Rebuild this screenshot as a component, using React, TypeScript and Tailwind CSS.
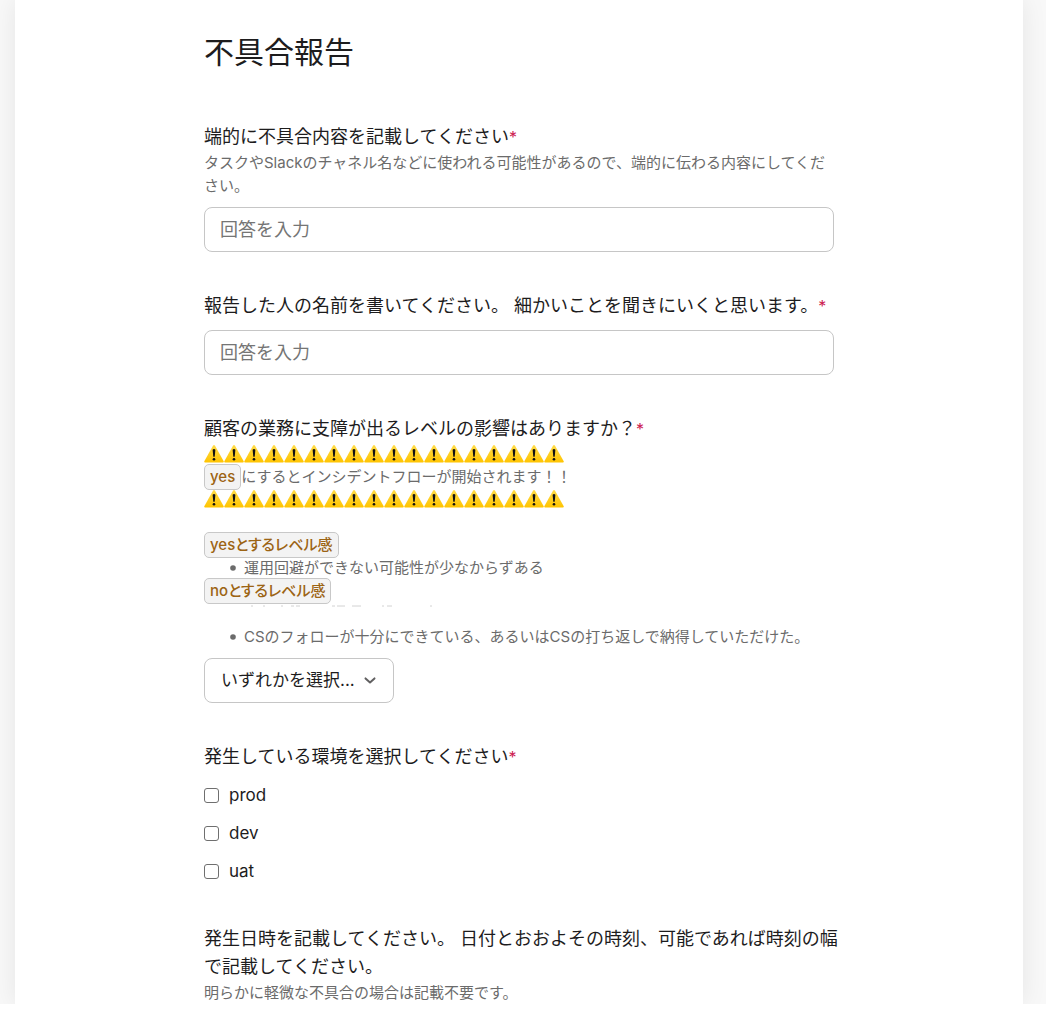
import { Fragment, type ReactNode } from 'react'

const environments = ['prod', 'dev', 'uat']

function WarningRow() {
  return (
    <div className="flex h-[22px] items-center" role="img" aria-label="警告">
      {Array.from({ length: 18 }, (_, i) => (
        <svg key={i} width="20" height="18" viewBox="0 0 20 18">
          <defs>
            <linearGradient id="warn" x1="0" y1="0" x2="0" y2="1">
              <stop offset="0" stopColor="#ffdc4a" />
              <stop offset="1" stopColor="#ffc400" />
            </linearGradient>
          </defs>
          <path
            d="M9.1 .6Q10 -.5 10.9 .6L19.7 16.2Q20.1 17.6 18.9 17.6H1.1Q-.1 17.6 .3 16.2Z"
            fill="url(#warn)"
          />
          <path d="M8.6 4.8Q10 3.4 11.4 4.8L10.7 11.8H9.3Z" fill="#111" />
          <circle cx="10" cy="14.3" r="1.3" fill="#111" />
        </svg>
      ))}
    </div>
  )
}

function Required() {
  return <span className="text-base text-[#cc2050]">*</span>
}

function Code({ children }: { children: ReactNode }) {
  return (
    <code className="inline-block rounded-[5px] border border-[#c8c8c8] bg-[#f3f3f3] px-[5px] font-[inherit] text-[15px] leading-6 font-medium text-[#9c6414] [font-feature-settings:'palt']">
      {children}
    </code>
  )
}

function Bullet({ children }: { children: ReactNode }) {
  return (
    <li className="flex items-center gap-2 pl-[26px]">
      <svg width="6" height="6" viewBox="0 0 6 6" className="shrink-0" aria-hidden="true">
        <circle cx="3" cy="3" r="2.8" fill="#6b6b6b" />
      </svg>
      <span>{children}</span>
    </li>
  )
}

const labelClass = 'block text-lg leading-7'
const helpClass = 'text-[15px] leading-[23px] text-[#6b6b6b]'
const inputClass =
  'block h-[45px] w-full rounded-lg border border-[#c6c6c6] bg-white px-[15px] text-lg placeholder:text-[#757575]'

export default function App() {
  return (
    <div className="bg-white font-[Inter,'Noto_Sans_CJK_JP',sans-serif] text-[#1d1c1d]">
      <div className="overflow-hidden bg-[#f8f8f8] pr-[23px] pl-[15px]">
        <main className="bg-white px-6 pt-[30px] shadow-[0_0_24px_rgba(0,0,0,0.08)]">
          <form className="mx-auto max-w-[630px]">
            <h1 className="text-[30px] leading-[44px]">不具合報告</h1>

            {/* 不具合内容 */}
            <div className="mt-[49px]">
              <label htmlFor="summary" className={labelClass}>
                端的に不具合内容を記載してください
                <Required />
              </label>
              <p className={helpClass}>
                タスクやSlackのチャネル名などに使われる可能性があるので、端的に伝わる内容にしてください。
              </p>
              <input id="summary" type="text" placeholder="回答を入力" className={`${inputClass} mt-[10px]`} />
            </div>

            {/* 報告者 */}
            <div className="mt-10">
              <label htmlFor="reporter" className={labelClass}>
                報告した人の名前を書いてください。 細かいことを聞きにいくと思います。
                <Required />
              </label>
              <input id="reporter" type="text" placeholder="回答を入力" className={`${inputClass} mt-[10px]`} />
            </div>

            {/* 影響レベル */}
            <div className="mt-10">
              <label htmlFor="impact" className={labelClass}>
                顧客の業務に支障が出るレベルの影響はありますか？
                <Required />
              </label>
              <div className={helpClass}>
                <WarningRow />
                <div className="flex h-[23px] items-center">
                  <Code>yes</Code>にするとインシデントフローが開始されます！！
                </div>
                <WarningRow />
                <div className="mt-[23px] flex h-[23px] items-center">
                  <Code>yesとするレベル感</Code>
                </div>
                <ul>
                  <Bullet>運用回避ができない可能性が少なからずある</Bullet>
                </ul>
                <div className="flex h-[23px] items-center">
                  <Code>noとするレベル感</Code>
                </div>
                {/* 伏せた行の上端だけが残る */}
                <div className="h-[23px] pt-[3px] pl-10">
                  <svg width="200" height="2" viewBox="0 0 200 2" className="block" aria-hidden="true">
                    <path
                      d="M7 1h2M19 1h2M37 1h2M47 1h3M52 1h4M88 1h3M93 1h8M108 1h9M138 1h2M143 1h5M186 1h2"
                      stroke="#d2d2d2"
                      strokeWidth="1"
                    />
                  </svg>
                </div>
                <ul>
                  <Bullet>CSのフォローが十分にできている、あるいはCSの打ち返しで納得していただけた。</Bullet>
                </ul>
              </div>
              <div className="relative mt-[10px] w-[190px]">
                <select
                  id="impact"
                  className="block h-[45px] w-full appearance-none rounded-lg border border-[#c6c6c6] bg-white pl-4 text-[17px]"
                >
                  <option>いずれかを選択...</option>
                  <option>yes</option>
                  <option>no</option>
                </select>
                <svg
                  className="pointer-events-none absolute top-[15px] right-[17px]"
                  width="14"
                  height="14"
                  viewBox="0 0 14 14"
                  fill="none"
                  stroke="#616061"
                  strokeWidth="2"
                  strokeLinecap="round"
                  strokeLinejoin="round"
                >
                  <path d="M2.5 5.4 7 9.4 11.5 5.4" />
                </svg>
              </div>
            </div>

            {/* 環境 */}
            <fieldset className="mt-10">
              <legend className={labelClass}>
                発生している環境を選択してください
                <Required />
              </legend>
              <div className="mt-[10px] flex flex-col gap-[10px]">
                {environments.map((env) => (
                  <label key={env} className="flex items-center gap-[10px] text-[17px] leading-7">
                    <input
                      type="checkbox"
                      className="size-[15px] appearance-none rounded-[3px] border border-[#6f6f6f] bg-white checked:bg-[#1264a3]"
                    />
                    {env}
                  </label>
                ))}
              </div>
            </fieldset>

            {/* 発生日時 */}
            <div className="mt-10">
              <h2 className={`${labelClass} whitespace-nowrap`}>
                {['発生日時を記載してください。 日付とおおよその時刻、可能であれば時刻の幅', 'で記載してください。'].map((line) => (
                  <Fragment key={line}>
                    {line}
                    <br />
                  </Fragment>
                ))}
              </h2>
              <p className={helpClass}>明らかに軽微な不具合の場合は記載不要です。</p>
            </div>
          </form>
        </main>
      </div>
    </div>
  )
}
